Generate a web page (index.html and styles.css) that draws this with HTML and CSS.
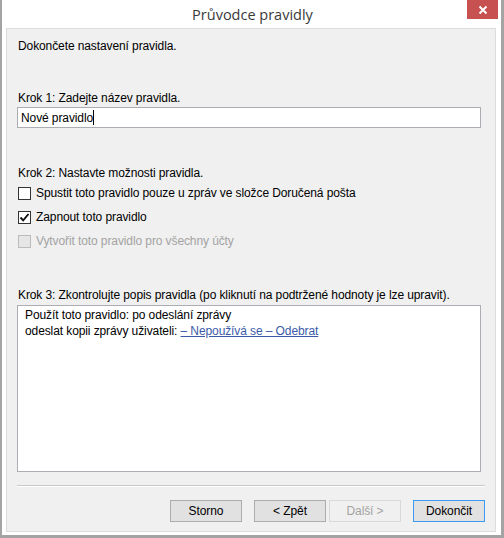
FILE: index.html
```html
<!DOCTYPE html>
<html lang="cs">
<head>
<meta charset="UTF-8">
<meta name="viewport" content="width=device-width, initial-scale=1.0">
<title>Průvodce pravidly</title>
<link rel="stylesheet" href="styles.css">
</head>
<body>
<div class="window">
    <div class="titlebar">
        <span class="title">Průvodce pravidly</span>
        <button class="close" title="Zavřít">
            <svg width="10" height="10" viewBox="0 0 10 10"><path d="M1.5 1.5L8.5 8.5M8.5 1.5L1.5 8.5" stroke="#fff" stroke-width="2"/></svg>
        </button>
    </div>
    <div class="panel">
        <div class="intro">Dokončete nastavení pravidla.</div>

        <label class="step step1" for="ruleName">Krok 1: Zadejte název pravidla.</label>
        <div class="namebox"><span id="ruleName">Nové pravidlo</span><span class="caret"></span></div>

        <div class="step step2">Krok 2: Nastavte možnosti pravidla.</div>
        <div class="option">
            <span class="check"></span>
            <span>Spustit toto pravidlo pouze u zpráv ve složce Doručená pošta</span>
        </div>
        <div class="option">
            <span class="check">
                <svg width="11" height="11" viewBox="0 0 11 11"><path d="M1.5 5.5L4.2 8.3L9.5 2" fill="none" stroke="#111" stroke-width="1.9"/></svg>
            </span>
            <span>Zapnout toto pravidlo</span>
        </div>
        <div class="option disabled">
            <span class="check"></span>
            <span>Vytvořit toto pravidlo pro všechny účty</span>
        </div>

        <div class="step step3">Krok 3: Zkontrolujte popis pravidla (po kliknutí na podtržené hodnoty je lze upravit).</div>
        <div class="description">
            <div>Použít toto pravidlo: po odeslání zprávy</div>
            <div>odeslat kopii zprávy uživateli: <a href="#">– Nepoužívá se – Odebrat</a></div>
        </div>

        <div class="separator"></div>

        <div class="buttons">
            <button class="btn">Storno</button>
            <div class="pair">
                <button class="btn">&lt; Zpět</button>
                <button class="btn" disabled>Další &gt;</button>
            </div>
            <button class="btn default">Dokončit</button>
        </div>
    </div>
</div>
</body>
</html>
```

FILE: styles.css
```css
/* Dialog window */
body {
    margin: 0;
    padding: 0;
    background: #fff;
    font-family: "Segoe UI", "Liberation Sans", Arial, sans-serif;
    font-size: 12px;
    letter-spacing: -0.1px;
    color: #000;
}
.window {
    width: 504px;
    height: 538px;
    box-sizing: border-box;
    border-left: 2px solid #a4a4a4;
    border-right: 3px solid #a4a4a4;
    border-bottom: 3px solid #a4a4a4;
    background: #fff;
    display: flex;
    flex-direction: column;
}
.titlebar {
    position: relative;
    height: 28px;
    display: flex;
    justify-content: center;
    align-items: center;
    flex-shrink: 0;
}
.title {
    font-family: "Open Sans", "Segoe UI", sans-serif;
    font-size: 14.5px;
    letter-spacing: 0;
    color: #3a3a3a;
    margin-left: 2px;
    margin-top: 1px;
}
.close {
    position: absolute;
    top: 0;
    right: 3px;
    width: 31px;
    height: 19px;
    border: none;
    padding: 0;
    background: #c75050;
    display: flex;
    align-items: center;
    justify-content: center;
}

/* Content area */
.panel {
    flex: 1;
    margin: 0 5px 3px 4px;
    border: 1px solid #dcdcdc;
    background: #f0f0f0;
    padding: 9px 14px 0 10px;
    display: flex;
    flex-direction: column;
}
.intro, .step {
    line-height: 16px;
    margin-left: 1px;
}
.step1 { margin-top: 36px; }
.step2 { margin-top: 37px; }
.step3 { margin-top: 34px; }

.namebox {
    height: 21px;
    box-sizing: border-box;
    border: 1px solid #abadb3;
    background: #fff;
    margin-top: 1px;
    padding: 0 3px;
    display: flex;
    align-items: center;
}
.caret {
    width: 1px;
    height: 15px;
    background: #000;
}

.option {
    height: 24px;
    display: flex;
    align-items: center;
    margin-left: 1px;
}
.option:first-of-type { margin-top: 2px; }
.check {
    width: 13px;
    height: 13px;
    box-sizing: border-box;
    border: 1px solid #333;
    background: #fff;
    margin-right: 5px;
    display: flex;
    align-items: center;
    justify-content: center;
}
.option.disabled { color: #a3a3a3; }
.option.disabled .check {
    border-color: #bcbcbc;
    background: #e6e6e6;
}

.description {
    height: 167px;
    box-sizing: border-box;
    border: 1px solid #abadb3;
    background: #fff;
    margin-top: 2px;
    padding: 1px 7px;
    line-height: 16px;
}
.description a {
    color: #3b5ba8;
}

.separator {
    height: 0;
    border-top: 1px solid #c8c8c8;
    border-bottom: 1px solid #fff;
    margin: 13px -4px 0 0;
}

/* Dialog buttons */
.buttons {
    display: flex;
    justify-content: flex-end;
    gap: 12px;
    margin: 13px -4px 0 0;
}
.pair {
    display: flex;
    gap: 3px;
}
.btn {
    width: 72px;
    height: 22px;
    box-sizing: border-box;
    font-family: inherit;
    font-size: 12px;
    letter-spacing: -0.1px;
    color: #000;
    border: 1px solid #adadad;
    background: #e1e1e1;
    padding: 0;
}
.btn:disabled {
    color: #a3a3a3;
    border-color: #d9d9d9;
    background: #f0f0f0;
}
.btn.default {
    border-color: #3c9af0;
    box-shadow: inset 0 0 0 1px #e1e1e1;
}
```
